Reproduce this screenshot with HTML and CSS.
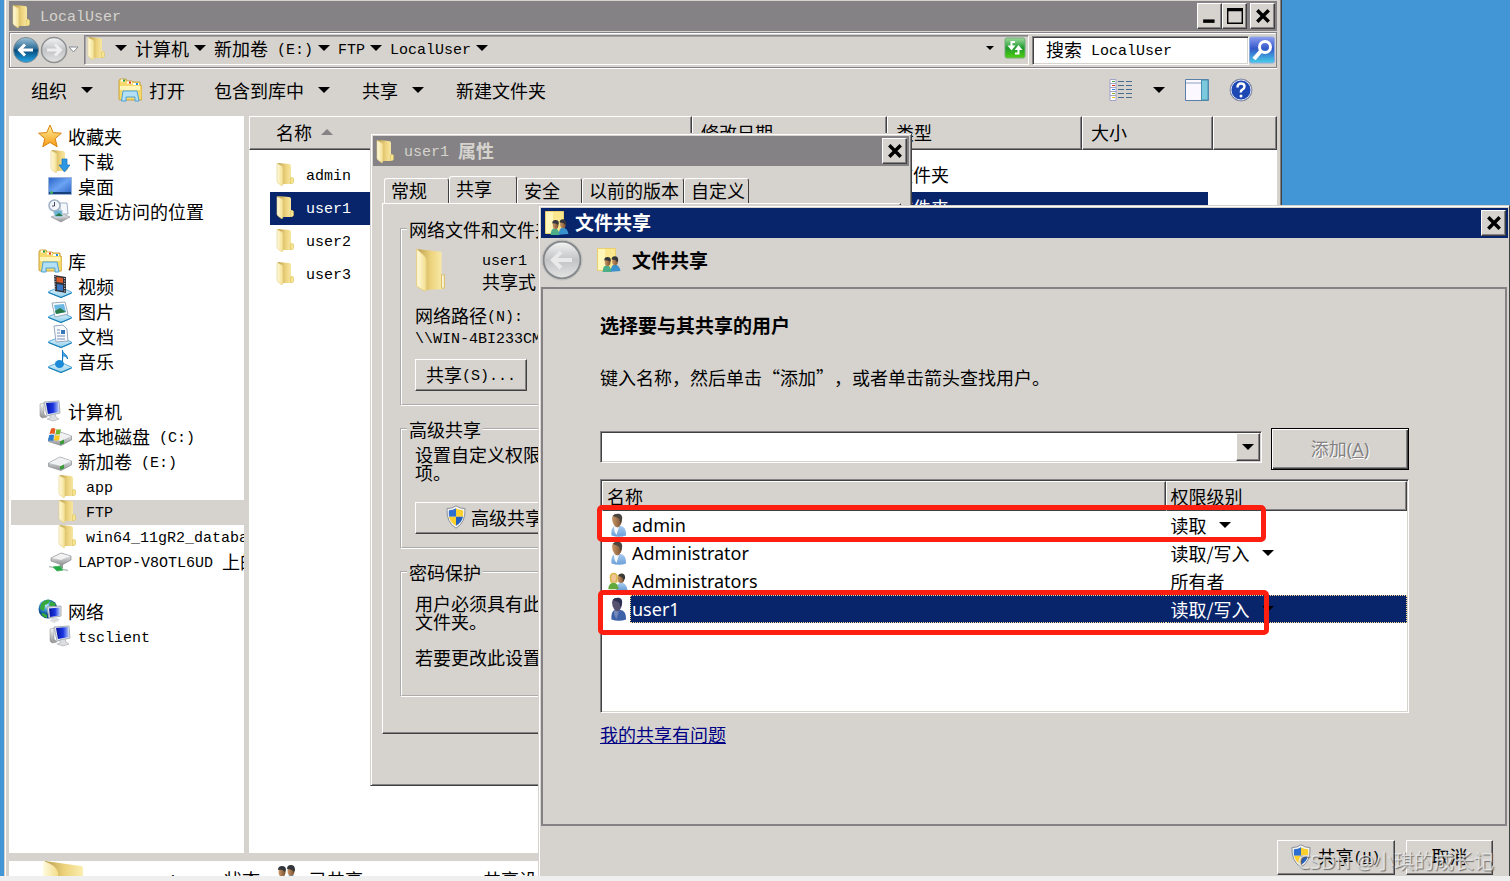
FILE: index.html
```html
<!DOCTYPE html>
<html lang="zh-CN">
<head>
<meta charset="utf-8">
<title>LocalUser</title>
<link rel="stylesheet" href="styles.css">
</head>
<body>
<svg class="sprite" aria-hidden="true">
  <defs>
    <linearGradient id="gFlap" x1="0" x2="1"><stop offset="0" stop-color="#fffbe0"/><stop offset="1" stop-color="#f3de8c"/></linearGradient>
    <linearGradient id="gBack" x1="0" x2="1"><stop offset="0" stop-color="#b89b4e"/><stop offset=".5" stop-color="#ecd27c"/><stop offset="1" stop-color="#fbeeb0"/></linearGradient>
    <linearGradient id="gBlue" x2="0" y2="1"><stop offset="0" stop-color="#9fc3d8"/><stop offset=".45" stop-color="#2c6c98"/><stop offset=".5" stop-color="#064a7c"/><stop offset="1" stop-color="#24a8e8"/></linearGradient>
    <linearGradient id="gGrey" x2="0" y2="1"><stop offset="0" stop-color="#f4f4f4"/><stop offset=".5" stop-color="#c2c3c5"/><stop offset="1" stop-color="#e4e4e4"/></linearGradient>
    <linearGradient id="gStar" x2="0" y2="1"><stop offset="0" stop-color="#fff3a0"/><stop offset="1" stop-color="#f79a12"/></linearGradient>
    <linearGradient id="gDesk" x2="1" y2="1"><stop offset="0" stop-color="#2a62c4"/><stop offset=".5" stop-color="#6ba4f4"/><stop offset="1" stop-color="#2a5fc0"/></linearGradient>
    <linearGradient id="gScreen" x2="1" y2="0"><stop offset="0" stop-color="#0512a0"/><stop offset=".55" stop-color="#1a35e0"/><stop offset="1" stop-color="#b8ccf8"/></linearGradient>
    <linearGradient id="gTray" x2="0" y2="1"><stop offset="0" stop-color="#e8f6fd"/><stop offset="1" stop-color="#8fcdea"/></linearGradient>
    <linearGradient id="gMetal" x2="0" y2="1"><stop offset="0" stop-color="#fafafa"/><stop offset="1" stop-color="#8f9194"/></linearGradient>
    <linearGradient id="gFind" x2="0" y2="1"><stop offset="0" stop-color="#8c9cf0"/><stop offset=".45" stop-color="#3458c8"/><stop offset="1" stop-color="#46d0e8"/></linearGradient>
    <linearGradient id="gGo" x2="0" y2="1"><stop offset="0" stop-color="#9fdca0"/><stop offset=".5" stop-color="#1f9a2c"/><stop offset="1" stop-color="#52d010"/></linearGradient>
    <linearGradient id="gShirt" x2="0" y2="1"><stop offset="0" stop-color="#a8ccf0"/><stop offset="1" stop-color="#6d9fd8"/></linearGradient>
    <linearGradient id="gFace" x1="0" x2="1"><stop offset="0" stop-color="#c99768"/><stop offset="1" stop-color="#7a5030"/></linearGradient>
    <radialGradient id="gGlobe" cx=".4" cy=".3"><stop offset="0" stop-color="#c8f0ff"/><stop offset=".5" stop-color="#3a9ad8"/><stop offset="1" stop-color="#0a4a90"/></radialGradient>
  </defs>
  <symbol id="folder" viewBox="0 0 24 24">
    <path d="M4 1l11 1q2 0 2 2v11l2 1v5l-2 1H8z" fill="url(#gBack)"/>
    <path d="M3 1.500l5 2.500q1 1 1 2v16l-1 2-4-3q-1-1-1-2z" fill="url(#gFlap)" stroke="#e6ce7c" stroke-width=".6"/>
    <path d="M16.500 16q2.500-1 3 .5v4q-1 1.500-3 1z" fill="#f7e690" stroke="#d9bd5c" stroke-width=".6"/>
  </symbol>
  <symbol id="star" viewBox="0 0 24 24"><path d="M12 1l3.200 7.600 8.200.6-6.200 5.400 2 8.200L12 18.400l-7.200 4.400 2-8.200L.6 9.200l8.200-.6z" fill="url(#gStar)" stroke="#d98412"/></symbol>
  <symbol id="download" viewBox="0 0 24 24"><use href="#folder"/><path d="M14 10h5v6h3l-5.500 7-5.500-7h3z" fill="#2c97e4" stroke="#1770b8" stroke-width=".7"/></symbol>
  <symbol id="desktop" viewBox="0 0 24 24"><path d="M.5 3.500h23v17H.5z" fill="url(#gDesk)" stroke="#9ab4d8"/><path d="M1 18h22v2H1z" fill="#16407c"/><circle cx="3.500" cy="18.500" r="1.500" fill="#45b060"/></symbol>
  <symbol id="recent" viewBox="0 0 24 24"><path d="M3 18l10-4 9 4-9 5z" fill="url(#gMetal)" stroke="#8c9094" stroke-width=".6"/><path d="M12 4h7l1 11h-8z" fill="#f4f8fd" stroke="#9fb0c4"/><path d="M5 11h9l1 7H7z" fill="#68b4d8" stroke="#d0d8e0"/><path d="M7 17l4-3 4 3z" fill="#2a7a48"/><circle cx="6.500" cy="6.500" r="5.500" fill="#f2f6fa" stroke="#9fb0c4" stroke-width="1.500"/><path d="M6.500 3v4H4" fill="none" stroke="#446"/></symbol>
  <symbol id="library" viewBox="0 0 24 24">
    <path d="M1 3q0-2 2-2h5l1 2h5l1 1h7v3l2 1v13q0 1-1 1H2q-1 0-1-1z" fill="#f6d96c" stroke="#c9a23c"/>
    <path d="M2 8h20v4H2z" fill="#fff5b8"/><path d="M3 2.500h4M9 4.500h5M15 6h6" stroke="#fff" stroke-width="2"/>
    <path d="M5 2.500h2" stroke="#1c9a3c" stroke-width="2"/><path d="M11 4.500h2" stroke="#e03020" stroke-width="2"/><path d="M18 6h2" stroke="#2090e0" stroke-width="2"/>
    <path d="M3.500 23l1.500-10h14l2 10h-4v-4H8v4z" fill="#b4e0f6" stroke="#4ba3d6"/>
  </symbol>
  <symbol id="tray" viewBox="0 0 24 24"><path d="M.5 17.500L12 13l11.500 5v1L13 23.500.5 18.500z" fill="url(#gTray)" stroke="#3a9cd0" stroke-width=".8"/><path d="M.5 18.500L13 23.500l10.500-4.500" fill="none" stroke="#1a80b8" stroke-width="1.200"/></symbol>
  <symbol id="video" viewBox="0 0 24 24"><use href="#tray"/><path d="M6 1l12 2v16L7 17z" fill="#30323a"/><path d="M8.500 3l6.500 1v5l-6.500-1z" fill="#d85a28"/><path d="M9 10l6 1v6l-6-1z" fill="#3a78c4"/><path d="M7 2v15M16.700 4v14" stroke="#ddd" stroke-dasharray="1 1.500"/></symbol>
  <symbol id="picture" viewBox="0 0 24 24"><use href="#tray"/><path d="M4 4l13-1 3 12-13 3z" fill="#fff" stroke="#9ab"/><path d="M6 6l10-1 2 8-10 2z" fill="#6cb8e4"/><path d="M7 12l5-3 6 4-10 2z" fill="#2a7a48"/></symbol>
  <symbol id="docs" viewBox="0 0 24 24"><use href="#tray"/><path d="M6 2l9-1 4 4 1 12-12 1z" fill="#f7f9fd" stroke="#99a8c0"/><path d="M9 6h3M9 9h3M9 12h8M9 15h8" stroke="#7890b8"/><path d="M13 6h4v4h-4z" fill="#3878b8"/></symbol>
  <symbol id="music" viewBox="0 0 24 24"><use href="#tray"/><path d="M14.500 16V1c0 4 5 4 5 9-1-3-3-3-4-3" fill="#4ab0f0" stroke="#1578c0"/><ellipse cx="11.500" cy="15" rx="4.500" ry="4" fill="#1c8ad8"/></symbol>
  <symbol id="computer" viewBox="0 0 24 24"><path d="M2 5l4-1v11l3 3-5 1-2-2z" fill="url(#gMetal)" stroke="#888" stroke-width=".5"/><path d="M6 3l15-1 1 12-13 3z" fill="#dfe3ea" stroke="#a8aeb8"/><path d="M8 4l12-1 1 10-11 2z" fill="url(#gScreen)"/><path d="M12 16l5-1 1 3 3 2-6 2-6-2 3-1z" fill="#dcdde0" stroke="#a5a8ac" stroke-width=".6"/></symbol>
  <symbol id="drive" viewBox="0 0 24 24"><path d="M.5 14L12 8l11.500 4v4L13 21.500.5 17.500z" fill="url(#gMetal)" stroke="#8a8c90" stroke-width=".7"/><path d="M1 14l11-5.500L23 12l-10 5z" fill="#f0f1f2"/><path d="M12 17.500l4-2v4l-4 1z" fill="#3a9a38"/></symbol>
  <symbol id="sysdrive" viewBox="0 0 24 24"><use href="#drive"/><path d="M3 5q2-2 4.500 0l-1 5q-2.500-1-5 0z" fill="#e85a20"/><path d="M8.500 5q2.500 1 4.500 0l-1 5q-2.500 1-4.500 0z" fill="#70b830"/><path d="M1.200 11q2.500-1 5 0l-1 6q-2.500-1-5 0z" fill="#2a7cd0"/><path d="M7 11q3 1 5 0l-1 5q-3 1-5 0z" fill="#fac820"/></symbol>
  <symbol id="netdrive" viewBox="0 0 24 24"><path d="M3 9l10-5 10 3v4l-9 5-11-4z" fill="url(#gMetal)" stroke="#8a8c90" stroke-width=".7"/><path d="M4 9l9-4 9 2-9 4z" fill="#f2f2f3"/><path d="M12 15h3v4h-3z" fill="#999"/><path d="M1 17.500l19 4" stroke="#b8c4bc" stroke-width="1.500"/><path d="M5 18l7-1 3 4-6 1z" fill="#25a845" stroke="#48b868"/></symbol>
  <symbol id="network" viewBox="0 0 24 24"><circle cx="10" cy="10" r="9.500" fill="url(#gGlobe)"/><path d="M3 5q4-5 9-4-1 4-5 5l-1 6-4-2zM13 2l5 3-3 4-4-3zM5 14l4 2v3q-4-1-6-4z" fill="#38a83c"/><path d="M9 8l14-1v10l-12 2z" fill="#e4e8ee" stroke="#a8aeb8"/><path d="M11 9.500l11-1v8l-10 1.500z" fill="url(#gScreen)"/><path d="M14 19l4-1 4 3-6 3-4-2z" fill="#dcdde0"/></symbol>
  <symbol id="shield" viewBox="0 0 20 24"><path d="M10 .8q4 3 9 2.700.8 14-9 19.700Q.2 17.500 1 3.500 6 3.800 10 .8z" fill="#f4f4f4" stroke="#8a9098"/><path d="M10 3.200v8.600H3Q2.600 8 3 5.300q4-.2 7-2.100z" fill="#2d6fd0"/><path d="M10 3.200q3 1.900 7 2.100.4 2.700 0 6.500h-7z" fill="#fbd02c"/><path d="M3 11.800h7v9Q4.500 18 3 11.800z" fill="#fbd02c"/><path d="M17 11.800h-7v9q5.500-2.800 7-9z" fill="#2460c0"/></symbol>
  <symbol id="person" viewBox="0 0 20 24"><path d="M3.500 22.500q-1-8 4-10l5 .5q6 1 5.500 9.500-7 2.500-14.500 0z" fill="url(#gShirt)"/><path d="M6 13l5 1-2.500 8q-3-4-2.500-9z" fill="#f4f7fb"/><path d="M4 5q1-4 5-4t5 5q0 6-4 8.500-3-.5-4-2.500-2-3-2-7z" fill="url(#gFace)"/><path d="M4.500 3Q7 0 11 .8t3 6.200l-1.500 3q-1-1-1-4Q9 4 4.500 3z" fill="#4c4640"/></symbol>
  <symbol id="person-dark" viewBox="0 0 20 24"><path d="M3.500 22.500q-1-8 4-10l5 .5q6 1 5.500 9.500-7 2.500-14.500 0z" fill="#3e62a8"/><path d="M6 13l5 1-2.500 8q-3-4-2.500-9z" fill="#7488b8"/><path d="M4 5q1-4 5-4t5 5q0 6-4 8.500-3-.5-4-2.500-2-3-2-7z" fill="#56516e"/><path d="M4.500 3Q7 0 11 .8t3 6.200l-1.500 3q-1-1-1-4Q9 4 4.500 3z" fill="#2c3050"/></symbol>
  <symbol id="couple" viewBox="0 0 24 24"><path d="M10 23q0-9 6-9t7.500 9z" fill="url(#gShirt)"/><ellipse cx="15.500" cy="9" rx="4" ry="5.500" fill="url(#gFace)"/><path d="M12 6q1-3.500 5-3t3.500 6l-2 3q0-5-6.500-6z" fill="#3e3a36"/><path d="M2 8q0-6 5-6t5 7l-1 5H3z" fill="#dcb84c"/><ellipse cx="7" cy="8.500" rx="3" ry="4.500" fill="#f0c498"/><path d="M.5 22q0-8 6-8t6 8z" fill="#62a83c"/></symbol>
  <symbol id="pair" viewBox="0 0 24 24"><path d="M2 24q0-9 5-9t6 9zM7 15" fill="#4bae88"/><path d="M12 23q0-9 5-9t7 8z" fill="#3a90cc"/><ellipse cx="8" cy="11" rx="3.500" ry="5" fill="url(#gFace)"/><path d="M4 9q0-4 4-4t4 4l-1 2q-2-3-7-2z" fill="#33363a"/><ellipse cx="17" cy="10" rx="3.500" ry="5" fill="url(#gFace)"/><path d="M13 8q0-4 4-4t4 5l-1 2q-2-3-7-3z" fill="#33363a"/></symbol>
  <symbol id="sharefolder" viewBox="0 0 24 24"><path d="M.5.500h18v22H.5z" fill="#fae78e" stroke="#ead06c"/><path d="M1 1h7v21H1z" fill="#fff6bc"/><g transform="translate(4 5) scale(.82)"><use href="#pair"/></g></symbol>
  <symbol id="close" viewBox="0 0 14 14"><path d="M2 2l10 10M12 2L2 12" stroke="#000" stroke-width="3"/></symbol>
</svg>

<main class="desktop">
  <section class="window explorer" aria-label="LocalUser">
    <header class="titlebar">
      <svg class="ico"><use href="#folder"/></svg>
      <h1 class="title"><span class="en">LocalUser</span></h1>
      <div class="winbtns">
        <button class="winbtn" aria-label="最小化"><svg viewBox="0 0 14 14"><path d="M1 11.500h10" stroke="#000" stroke-width="3"/></svg></button>
        <button class="winbtn" aria-label="最大化"><svg viewBox="0 0 14 14"><path d="M.5.500h13v13H.5zM0 2h14" fill="none" stroke="#000" stroke-width="1.500"/></svg></button>
      </div>
      <button class="winbtn" aria-label="关闭"><svg><use href="#close"/></svg></button>
    </header>

    <nav class="navbar" aria-label="地址">
      <div class="history">
        <button class="flat" aria-label="后退"><svg width="28" height="28" viewBox="0 0 28 28"><circle cx="14" cy="14" r="12.500" fill="url(#gBlue)" stroke="#7d8a94"/><path d="M21 14H8M13 8.500L7.500 14l5.500 5.500" fill="none" stroke="#fff" stroke-width="3"/></svg></button>
        <button class="flat" aria-label="前进"><svg width="28" height="28" viewBox="0 0 28 28"><circle cx="14" cy="14" r="12.500" fill="url(#gGrey)" stroke="#8e9092" stroke-width="1.500"/><path d="M7 14h13M15 8.500l5.500 5.500-5.500 5.500" fill="none" stroke="#eee" stroke-width="3"/></svg></button>
        <button class="flat" aria-label="历史"><svg width="11" height="8" viewBox="0 0 11 8"><path d="M1 1h9L5.500 6z" fill="#fff" stroke="#848a92"/></svg></button>
      </div>
      <div class="address">
        <svg class="ico"><use href="#folder"/></svg>
        <button class="crumb" aria-label="展开"><i class="tri"></i></button>
        <button class="crumb">计算机<i class="tri"></i></button>
        <button class="crumb"><span>新加卷<span class="en"> (E:)</span></span><i class="tri"></i></button>
        <button class="crumb"><span><span class="en">FTP</span></span><i class="tri"></i></button>
        <button class="crumb"><span><span class="en">LocalUser</span></span><i class="tri"></i></button>
        <button class="flat push" aria-label="历史地址"><i class="tri small"></i></button>
        <button class="flat" aria-label="刷新"><svg width="22" height="22" viewBox="0 0 22 22"><rect x="1" y="1" width="20" height="20" rx="2" fill="url(#gGo)" stroke="#6fae74"/><path d="M11 5H7.500v4" fill="none" stroke="#fff" stroke-width="2"/><path d="M3.500 8.500h8l-4 5z" fill="#fff"/><path d="M11 16.500h3.500v-4" fill="none" stroke="#fff" stroke-width="2"/><path d="M10.500 13h8l-4-5z" fill="#fff"/></svg></button>
      </div>
      <label class="search"><span>搜索<span class="en"> LocalUser</span></span><input type="text" aria-label="搜索 LocalUser"></label>
      <button class="flat" aria-label="搜索"><svg width="26" height="28" viewBox="0 0 26 28"><rect x=".5" y="1" width="25" height="26" rx="2" fill="url(#gFind)" stroke="#8fa8e0"/><circle cx="16" cy="11" r="5.500" fill="none" stroke="#fff" stroke-width="3"/><path d="M12 15l-7 8" stroke="#fff" stroke-width="4"/></svg></button>
    </nav>

    <div class="toolbar">
      <button class="tool">组织<i class="tri"></i></button>
      <button class="tool open"><svg class="ico"><use href="#library"/></svg>打开</button>
      <button class="tool menu">包含到库中<i class="tri"></i></button>
      <button class="tool menu">共享<i class="tri"></i></button>
      <button class="tool">新建文件夹</button>
      <div class="views">
        <button class="flat" aria-label="视图"><svg width="24" height="22" viewBox="0 0 24 22"><path d="M1 .5h6v21H1zM1 4.500h6M1 8.500h6M1 12.500h6M1 16.500h6" fill="#fff" stroke="#a0a4c8"/><path d="M9 2.500h6M17 2.500h6M9 6.500h6M17 6.500h6M9 10.500h6M17 10.500h6M9 14.500h6M17 14.500h6M9 18.500h6M17 18.500h6" stroke="#4a6c8c"/><path d="M3 2.500h3" stroke="#4c9c4c"/><path d="M3 6.500h3" stroke="#e03020"/><path d="M3 10.500h3" stroke="#3a80e0"/><path d="M3 14.500h3" stroke="#90b020"/><path d="M3 18.500h3" stroke="#e0c820"/></svg></button>
        <button class="flat" aria-label="更改视图"><i class="tri"></i></button>
        <button class="flat" aria-label="预览窗格"><svg width="24" height="22" viewBox="0 0 24 22"><path d="M.5.500h23v21H.5z" fill="#fcf8ff" stroke="#5a80a8"/><path d="M16.500 1h6.500v20h-6.500z" fill="#7cc8dc" stroke="#4a90b0"/><path d="M1 4h15" stroke="#88a4c0"/></svg></button>
        <button class="flat" aria-label="帮助"><svg width="24" height="24" viewBox="0 0 24 24"><circle cx="12" cy="12" r="11" fill="#1d48b4" stroke="#8d8f9a"/><circle cx="12" cy="12" r="10" fill="none" stroke="#dfe4f4"/><path d="M8.500 9.500q0-4 3.500-4t3.500 3q0 2-2 3t-1.500 3" fill="none" stroke="#fff" stroke-width="2.400"/><circle cx="12" cy="18" r="1.500" fill="#fff"/></svg></button>
      </div>
    </div>

    <div class="panes">
      <aside class="tree">
        <ul>
          <li><svg class="ico"><use href="#star"/></svg>收藏夹</li>
          <li class="l1"><svg class="ico"><use href="#download"/></svg>下载</li>
          <li class="l1"><svg class="ico"><use href="#desktop"/></svg>桌面</li>
          <li class="l1"><svg class="ico"><use href="#recent"/></svg>最近访问的位置</li>
        </ul>
        <ul>
          <li><svg class="ico"><use href="#library"/></svg>库</li>
          <li class="l1"><svg class="ico"><use href="#video"/></svg>视频</li>
          <li class="l1"><svg class="ico"><use href="#picture"/></svg>图片</li>
          <li class="l1"><svg class="ico"><use href="#docs"/></svg>文档</li>
          <li class="l1"><svg class="ico"><use href="#music"/></svg>音乐</li>
        </ul>
        <ul>
          <li><svg class="ico"><use href="#computer"/></svg>计算机</li>
          <li class="l1"><svg class="ico"><use href="#sysdrive"/></svg><span>本地磁盘<span class="en"> (C:)</span></span></li>
          <li class="l1"><svg class="ico"><use href="#drive"/></svg><span>新加卷<span class="en"> (E:)</span></span></li>
          <li class="l2"><svg class="ico"><use href="#folder"/></svg><span><span class="en">app</span></span></li>
          <li class="l2 current"><svg class="ico"><use href="#folder"/></svg><span><span class="en">FTP</span></span></li>
          <li class="l2"><svg class="ico"><use href="#folder"/></svg><span><span class="en">win64_11gR2_database</span></span></li>
          <li class="l1"><svg class="ico"><use href="#netdrive"/></svg><span><span class="en">LAPTOP-V8OTL6UD </span>上的</span></li>
        </ul>
        <ul>
          <li><svg class="ico"><use href="#network"/></svg>网络</li>
          <li class="l1"><svg class="ico"><use href="#computer"/></svg><span><span class="en">tsclient</span></span></li>
        </ul>
      </aside>
      <div class="files">
        <div class="cols">
          <button class="col">名称<i class="tri up"></i></button>
          <button class="col">修改日期</button>
          <button class="col">类型</button>
          <button class="col">大小</button>
          <span class="col"></span>
        </div>
        <ul class="rows">
          <li><svg class="ico"><use href="#folder"/></svg><span><span class="en">admin</span></span><span>文件夹</span></li>
          <li class="selected"><svg class="ico"><use href="#folder"/></svg><span><span class="en">user1</span></span><span>文件夹</span></li>
          <li><svg class="ico"><use href="#folder"/></svg><span><span class="en">user2</span></span><span>文件夹</span></li>
          <li><svg class="ico"><use href="#folder"/></svg><span><span class="en">user3</span></span><span>文件夹</span></li>
        </ul>
      </div>
    </div>

    <footer class="details">
      <svg class="big" viewBox="0 0 48 48"><path d="M4 0l36 5q2 0 2 3v40H14z" fill="url(#gBack)"/><path d="M2 0q14 4 15 12v36H2z" fill="url(#gFlap)"/></svg>
      <span class="item"><span class="en">user1</span></span>
      <span>状态:</span>
      <svg class="ico"><use href="#pair"/></svg>
      <span class="state">已共享</span>
      <span>共享设备</span>
    </footer>
  </section>

  <section class="window props" aria-label="user1 属性">
    <header class="titlebar">
      <svg class="ico"><use href="#folder"/></svg>
      <h2 class="title"><span class="en">user1 </span>属性</h2>
      <button class="winbtn" aria-label="关闭"><svg><use href="#close"/></svg></button>
    </header>
    <div class="tabs">
      <button class="tab">常规</button>
      <button class="tab active">共享</button>
      <button class="tab">安全</button>
      <button class="tab wide">以前的版本</button>
      <button class="tab">自定义</button>
    </div>
    <div class="panel">
      <fieldset>
        <legend>网络文件和文件夹共享</legend>
        <div class="group g1">
          <div class="target">
            <svg width="32" height="44" viewBox="0 0 32 46"><path d="M1 1l26 3v28l3 2v8l-2 1-19 1z" fill="url(#gBack)"/><path d="M1 1l8 7q2 2 2 5v31l-2 1-8-5z" fill="url(#gFlap)" stroke="#e6ce7c"/><path d="M27 28h3v14h-3z" fill="#f7f3dc" stroke="#d9bd5c"/></svg>
            <p><span class="en">user1</span><br>共享式</p>
          </div>
          <p class="path">网络路径<span class="en">(N):</span><br><span class="en">\\WIN-4BI233CMO1L</span></p>
          <button class="btn"><span>共享<span class="en">(S)...</span></span></button>
        </div>
      </fieldset>
      <fieldset>
        <legend>高级共享</legend>
        <div class="group g2">
          <p>设置自定义权限，创建多个共享，并设置其他高级共享选项。</p>
          <button class="btn adv"><svg width="20" height="24"><use href="#shield"/></svg><span>高级共享<span class="en">(D)...</span></span></button>
        </div>
      </fieldset>
      <fieldset>
        <legend>密码保护</legend>
        <div class="group g3">
          <p>用户必须具有此计算机的用户帐户和密码，才能访问共享文件夹。</p>
          <p>若要更改此设置，请使用网络和共享中心。</p>
        </div>
      </fieldset>
    </div>
  </section>

  <section class="window share" aria-label="文件共享">
    <header class="titlebar active">
      <svg class="ico"><use href="#sharefolder"/></svg>
      <h2 class="title">文件共享</h2>
      <button class="winbtn" aria-label="关闭"><svg><use href="#close"/></svg></button>
    </header>
    <div class="wizard">
      <button class="flat" aria-label="后退"><svg width="42" height="42" viewBox="0 0 42 42"><circle cx="21" cy="21" r="18.500" fill="url(#gGrey)" stroke="#85888b" stroke-width="2"/><circle cx="21" cy="21" r="20" fill="none" stroke="#bfbfbf"/><path d="M31 21H13M20 13l-8 8 8 8" fill="none" stroke="#e9e9e9" stroke-width="4"/></svg></button>
      <svg class="ico"><use href="#sharefolder"/></svg>
      <strong>文件共享</strong>
    </div>
    <div class="body">
      <h3>选择要与其共享的用户</h3>
      <p class="hint">键入名称，然后单击“添加”，或者单击箭头查找用户。</p>
      <div class="entry">
        <div class="combo"><input type="text" aria-label="用户名称"><button class="drop" aria-label="展开列表"><i class="tri"></i></button></div>
        <button class="add" disabled>添加(<u>A</u>)</button>
      </div>
      <div class="listbox">
        <table>
          <thead><tr><th class="who">名称</th><th>权限级别</th></tr></thead>
          <tbody>
            <tr><td><span class="cell"><svg class="p"><use href="#person"/></svg>admin</span></td><td><button class="level">读取<i class="tri"></i></button></td></tr>
            <tr><td><span class="cell"><svg class="p"><use href="#person"/></svg>Administrator</span></td><td><button class="level">读取/写入<i class="tri"></i></button></td></tr>
            <tr><td><span class="cell"><svg class="p"><use href="#couple"/></svg>Administrators</span></td><td><span class="level">所有者</span></td></tr>
            <tr class="selected"><td><span class="cell"><svg class="p"><use href="#person-dark"/></svg><span class="fill">user1</span></span></td><td class="mark"><button class="level">读取/写入<i class="tri"></i></button></td></tr>
          </tbody>
        </table>
        <div class="box first"></div>
        <div class="box second"></div>
      </div>
      <a class="help" href="#">我的共享有问题</a>
    </div>
    <footer class="actions">
      <button class="btn ok"><svg width="20" height="24"><use href="#shield"/></svg><span>共享<span class="en">(<u>H</u>)</span></span></button>
      <button class="btn">取消</button>
    </footer>
  </section>
  <div class="watermark">CSDN @小琪的成长记</div>
</main>
</body>
</html>
```
FILE: styles.css
```css
* { box-sizing: border-box; }

:root {
  --face: #d6d3ce;
  --shade: #848284;
  --dark: #424142;
  --navy: #08246b;
  --cjk: "Noto Sans CJK SC", sans-serif;
}

body {
  margin: 0;
  background: #efefef;
  font: 18px/18px var(--cjk);
  color: #000;
  text-spacing-trim: space-all;
}

h1, h2, h3, p, ul { margin: 0; padding: 0; font-size: 18px; font-weight: 400; }
ul { list-style: none; }
button, input { font: inherit; color: inherit; margin: 0; border-radius: 0; }
button { white-space: nowrap; }
svg { display: block; flex: none; }

.sprite { position: absolute; width: 0; height: 0; }
.en { font: 400 15px/10px "Liberation Mono", monospace; white-space: pre; vertical-align: 2px; }
.ico { width: 24px; height: 24px; }

.flat, .crumb, .tool {
  display: flex; align-items: center; padding: 0; border: 0; background: none;
}

.tri {
  flex: none; width: 0; height: 0;
  border: 6px solid transparent; border-top-color: #000; border-bottom: 0;
}
.tri.small { border-width: 4px; border-bottom: 0; }
.tri.up { border-top: 0; border-bottom: 6px solid var(--shade); }

.desktop {
  position: relative; height: 100vh; overflow: hidden;
  background: linear-gradient(#4296d6, #4296d6) no-repeat 0 0 / 100% calc(100% - 5px);
}

/* window frames */
.window {
  position: absolute; display: flex; flex-direction: column;
  background: var(--face);
  border: 1px solid; border-color: var(--face) var(--dark) var(--dark) var(--face);
  box-shadow: inset 1px 1px #fff, inset -1px -1px var(--shade);
}
.titlebar {
  display: flex; align-items: center; height: 30px; flex: none;
  padding: 0 2px 0 1px; background: var(--shade); color: var(--face);
}
.titlebar.active { background: var(--navy); color: #fff; }
.title { flex: 1; margin-left: 6px; padding-bottom: 2px; font-weight: 700; }
.winbtns { display: flex; margin-right: 3px; }
.winbtn, .btn, .drop {
  display: flex; align-items: center; justify-content: center;
  background: var(--face); padding: 0;
  border: 1px solid; border-color: #fff var(--dark) var(--dark) #fff;
  box-shadow: inset -1px -1px var(--shade);
}
.winbtn { width: 25px; height: 26px; }
.winbtn svg { width: 16px; height: 16px; }

/* explorer */
.explorer { top: 0; left: 4px; right: 228px; bottom: 5px; border-top: 0; border-bottom: 0; padding: 1px 4px 0; box-shadow: inset 1px 0 #fff, inset -1px 0 var(--shade); }

.navbar {
  display: flex; align-items: center; height: 36px; flex: none; margin-top: 1px;
  padding: 0 1px; border: 1px solid var(--shade); box-shadow: inset 1px 1px #fff, 0 1px #fff;
}
.history { display: flex; align-items: center; width: 73px; padding-left: 1px; }
.address {
  flex: 1; display: flex; align-items: center; height: 30px; padding: 0 2px 4px 0;
  border: 1px solid; border-color: var(--shade) #fff #fff var(--shade); box-shadow: inset 1px 1px #a5a2a5;
}
.address .ico { margin-right: 6px; }
.crumb { gap: 5px; margin-right: 8px; }
.push { margin-left: auto; margin-right: 10px; }
.search {
  display: flex; align-items: center; width: 217px; height: 29px; margin-left: 3px; padding: 0 0 2px 13px;
  background: #fff; border: 1px solid; border-color: var(--shade) #fff #fff var(--shade);
  box-shadow: inset 1px 1px var(--dark), inset -1px -1px var(--face); white-space: nowrap;
}
.search input { flex: 1; min-width: 0; border: 0; background: none; outline: 0; padding: 0; }

.toolbar { display: flex; align-items: center; gap: 25px; height: 48px; flex: none; padding: 0 24px 4px 22px; }
.tool { gap: 14px; }
.tool.open { gap: 7px; padding-right: 4px; }
.tool.menu { padding-right: 7px; }
.views { display: flex; align-items: center; gap: 20px; margin-left: auto; }

.panes { flex: 1; display: flex; gap: 5px; min-height: 0; }
.tree { width: 235px; flex: none; background: #fff; padding: 9px 0 0 2px; overflow: hidden; }
.tree ul { margin-bottom: 25px; }
.tree li { display: flex; align-items: center; gap: 6px; height: 25px; padding: 0 0 3px 27px; white-space: nowrap; }
.tree .l1 { padding-left: 37px; }
.tree .l2 { padding-left: 45px; }
.tree .current { background: var(--face); }

.files { flex: 1; min-width: 0; background: #fff; overflow: hidden; }
.cols { display: grid; grid-template-columns: 443px 195px 195px 131px 1fr; height: 34px; }
.col {
  display: flex; align-items: center; gap: 9px; padding: 0 0 3px 8px; background: var(--face);
  border: 1px solid; border-color: #fff var(--dark) var(--dark) #fff; box-shadow: inset -1px -1px var(--shade);
}
.col:first-child { padding-left: 26px; }
.rows { padding: 9px 69px 0 21px; }
.rows li { display: grid; grid-template-columns: 24px 581px 1fr; column-gap: 8px; align-items: center; height: 33px; padding: 0 0 3px 4px; }
.rows .selected { background: var(--navy); color: #fff; }

.details {
  display: flex; align-items: flex-start; height: 15px; flex: none; margin-top: 8px; overflow: hidden;
  background: #fff; padding-left: 32px; white-space: nowrap;
}
.details > span { margin-top: 9px; }
.details .big { width: 48px; height: 48px; }
.details .item { width: 92px; margin-left: 43px; }
.details .ico { margin: 0 11px 0 9px; }
.details .state { width: 174px; }

/* properties dialog */
.props { left: 370px; top: 133px; width: 542px; padding: 2px 2px 51px; }
.tabs { display: flex; align-items: flex-end; margin: 10px 0 0 11px; }
.tab {
  width: 65px; height: 25px; padding: 0 0 2px 6px; text-align: left; background: var(--face);
  border: 1px solid; border-color: #fff var(--dark) transparent #fff; border-bottom: 0; border-radius: 3px 3px 0 0;
}
.tab.active { width: 68px; height: 27px; padding-bottom: 4px; }
.tab.wide { width: 102px; }
.panel {
  display: flex; flex-direction: column; gap: 14px; margin: 0 8px 0 9px; padding: 16px 17px 36px;
  border: 1px solid; border-color: #fff var(--dark) var(--dark) #fff; box-shadow: inset -1px -1px var(--shade);
}
fieldset { margin: 0; padding: 0 5px; border: 2px groove #fff; min-width: 0; }
legend { padding: 0 2px; }
.group { display: flex; flex-direction: column; align-items: flex-start; padding: 0 8px 13px; }
.target { display: flex; gap: 35px; line-height: 22px; }
.g1 { padding-top: 10px; }
.path { margin: 12px 0 11px; line-height: 22px; }
.btn { height: 32px; padding: 0 10px 3px; }
.g2 { padding-top: 7px; }
.g2 p { margin-bottom: 21px; }
.adv { gap: 5px; padding: 0 30px 2px; }
.g3 { padding: 13px 8px 29px; gap: 18px; }

/* sharing wizard */
.share { left: 538px; right: 0; top: 205px; bottom: 5px; padding: 2px 1px 0 2px; border-bottom: 0; box-shadow: inset 1px 1px #fff, inset -1px 0 var(--face); }
.share .titlebar { padding-left: 4px; }
.wizard { display: flex; align-items: center; height: 49px; flex: none; padding-bottom: 5px; }
.wizard .flat { margin-right: 14px; }
.wizard .ico { margin-right: 11px; }
.wizard strong, .body h3, .share .title { font-size: 19px; font-weight: 700; }
.body { flex: 1; min-height: 0; margin-right: 1px; padding: 24px 96px 0 57px; border: 2px solid var(--shade); line-height: 24px; }
.hint { margin-top: 28px; }
.entry { display: flex; align-items: center; gap: 9px; margin-top: 39px; }
.combo {
  flex: 1; display: flex; height: 32px; padding: 1px; margin-bottom: 4px; background: #fff;
  border: 1px solid; border-color: var(--shade) #fff #fff var(--shade); box-shadow: inset 1px 1px var(--dark), inset -1px -1px var(--face);
}
.combo input { flex: 1; min-width: 0; border: 0; outline: 0; background: none; }
.drop { width: 24px; }
.add {
  width: 138px; height: 42px; padding: 0; background: var(--face); border: 1px solid #000;
  box-shadow: inset 1px 1px #fff, inset -1px -1px var(--dark), inset -2px -2px var(--shade);
  color: var(--shade); text-shadow: 1px 1px #fff;
}
.add, .cell { font-family: "Noto Sans", var(--cjk); }
.listbox {
  position: relative; min-height: 234px; margin: 9px 0; padding: 1px; background: #fff;
  border: 1px solid; border-color: var(--shade) #fff #fff var(--shade); box-shadow: inset 1px 1px var(--dark), inset -1px -1px var(--face);
}
table { width: 100%; border-collapse: separate; border-spacing: 0; table-layout: fixed; line-height: 18px; }
th {
  height: 30px; padding: 0 0 0 4px; text-align: left; font-weight: 400; background: var(--face);
  border: 1px solid; border-color: #fff var(--dark) var(--dark) #fff; box-shadow: inset -1px -1px var(--shade);
}
th.who { width: 70%; }
td { height: 28px; padding: 0 0 0 5px; }
td:first-child { padding-left: 6px; }
.cell { display: flex; align-items: center; gap: 4px; height: 28px; }
.p { width: 20px; height: 24px; }
.level { display: flex; align-items: center; gap: 12px; padding: 0; border: 0; background: none; }
.selected td { color: #fff; }
.fill { flex: 1; align-self: stretch; display: flex; align-items: center; margin-left: -2px; padding-left: 1px; background: var(--navy); border: 1px dotted #ffdb94; border-right: 0; }
.selected .mark { background: var(--navy); border: 1px dotted #ffdb94; border-left: 0; }
.box { position: absolute; border: 5px solid #ff1f10; border-radius: 5px; }
.box.first { left: -4px; right: 142px; top: 25px; height: 37px; }
.box.second { left: -3px; right: 139px; top: 110px; height: 45px; }
.help { color: #000084; text-decoration: underline; }
.actions { display: flex; justify-content: flex-end; gap: 11px; height: 50px; flex: none; padding: 14px 15px 0 0; }
.actions .btn { width: 87px; height: 35px; }
.actions .ok { width: 118px; gap: 6px; }

.watermark {
  position: absolute; right: 16px; bottom: 7px; font: 20px/24px "Noto Sans", var(--cjk);
  color: rgba(240, 240, 240, .75); text-shadow: 1px 1px 1px rgba(90, 90, 90, .8); white-space: nowrap;
}
```
